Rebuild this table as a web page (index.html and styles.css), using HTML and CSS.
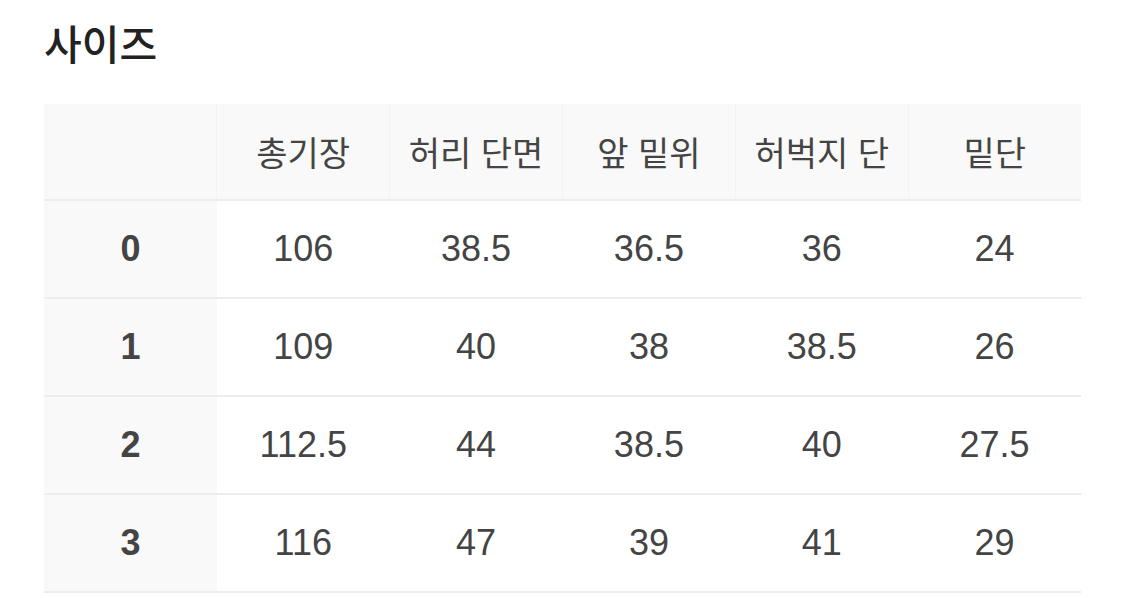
FILE: index.html
```html
<!DOCTYPE html>
<html lang="ko">
<head>
<meta charset="utf-8">
<link rel="stylesheet" href="styles.css">
</head>
<body>
<div class="page">
  <h2 class="title">사이즈</h2>
  <table class="size-table">
    <thead>
      <tr>
        <th class="corner"></th>
        <th>총기장</th>
        <th>허리 단면</th>
        <th>앞 밑위</th>
        <th>허벅지 단</th>
        <th>밑단</th>
      </tr>
    </thead>
    <tbody>
      <tr><th>0</th><td>106</td><td>38.5</td><td>36.5</td><td>36</td><td>24</td></tr>
      <tr><th>1</th><td>109</td><td>40</td><td>38</td><td>38.5</td><td>26</td></tr>
      <tr><th>2</th><td>112.5</td><td>44</td><td>38.5</td><td>40</td><td>27.5</td></tr>
      <tr><th>3</th><td>116</td><td>47</td><td>39</td><td>41</td><td>29</td></tr>
    </tbody>
  </table>
</div>
</body>
</html>
```
FILE: styles.css
```css
html, body {
  margin: 0;
  padding: 0;
  background: #ffffff;
}

.page {
  padding: 18px 44px 0 44px;
  font-family: "Liberation Sans", "Noto Sans CJK KR", sans-serif;
  color: #444444;
}

.title {
  margin: 0;
  font-family: "Noto Sans CJK KR", sans-serif;
  font-size: 41px;
  font-weight: 500;
  line-height: 48px;
  color: #222222;
}

.size-table {
  margin-top: 38px;
  width: 1037px;
  border-collapse: collapse;
  table-layout: fixed;
}

.size-table th,
.size-table td {
  height: 96px;
  padding: 0;
  text-align: center;
  vertical-align: middle;
  border-bottom: 2px solid #ededed;
  font-size: 36px;
  font-weight: 400;
  color: #444444;
}

.size-table thead th {
  background: #f9f9f9;
  font-family: "Noto Sans CJK KR", sans-serif;
  font-size: 34px;
  font-weight: 400;
  border-left: 1px solid #f3f3f3;
  height: 95px;
}

.size-table thead th.corner {
  border-left: none;
}

.size-table tbody th {
  background: #f9f9f9;
  font-weight: 700;
  color: #444444;
}
```
